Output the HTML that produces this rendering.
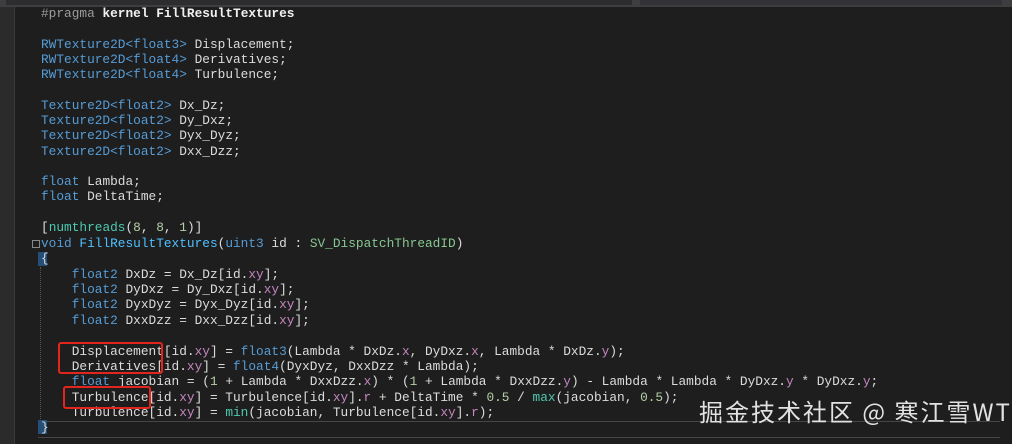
<!DOCTYPE html>
<html><head><meta charset="utf-8"><style>
body{margin:0;width:1012px;height:444px;background:#1e1e1e;overflow:hidden;position:relative;font-family:"Liberation Mono",monospace;}
#top{position:absolute;left:0;top:0;width:1012px;height:7px;background:#3e3e40;}
#top .b{position:absolute;left:6px;top:0;width:626px;height:5px;background:#2d2d30;}
#top .c{position:absolute;left:640px;top:0;width:362px;height:5px;background:#333337;}
#left{position:absolute;left:0;top:7px;width:14px;height:437px;background:#2b2b2b;border-right:1px solid #3a3a3a;}
.l{position:absolute;left:41px;font-size:12.8px;line-height:15.3px;white-space:pre;color:#dcdcdc;}
.k{color:#569cd6}.g{color:#9b9b9b}.w{color:#f0f0f0;font-weight:bold}.n{color:#b5cea8}.p{color:#c586c0}.t{color:#4ec9b0}.s{color:#86c691}.f{color:#4fc1ff}.m{color:#d0d0d0}
.box{position:absolute;border:2px solid #e3261d;border-radius:3px;}
#cur{position:absolute;left:38px;top:421px;width:962px;height:15px;border-top:1px solid #464646;border-bottom:1px solid #464646;}
#wm{position:absolute;left:699px;top:393px;font-family:"Noto Sans CJK SC",sans-serif;font-size:24px;letter-spacing:2px;color:#e2e2e2;white-space:nowrap;}
.fold{position:absolute;left:40px;width:1px;border-left:1px dotted #555;}
</style></head><body>
<div id="top"><div class="b"></div><div class="c"></div></div>
<div id="left"></div>
<div id="cur"></div>
<div class="fold" style="top:267px;height:152px"></div>
<div style="position:absolute;left:32px;top:240px;width:6px;height:6px;border:1px solid #888;"></div>
<div style="position:absolute;left:38px;top:252px;width:9px;height:14px;background:#264f78"></div>
<div style="position:absolute;left:38px;top:420px;width:9px;height:14px;background:#264f78"></div>
<div class="l" style="top:6px"><span class="g">#pragma</span> <span class="w">kernel</span> <span class="w">FillResultTextures</span></div>
<div class="l" style="top:37px"><span class="k">RWTexture2D&lt;float3&gt;</span> Displacement;</div>
<div class="l" style="top:52px"><span class="k">RWTexture2D&lt;float4&gt;</span> Derivatives;</div>
<div class="l" style="top:67px"><span class="k">RWTexture2D&lt;float4&gt;</span> Turbulence;</div>
<div class="l" style="top:98px"><span class="k">Texture2D&lt;float2&gt;</span> Dx_Dz;</div>
<div class="l" style="top:113px"><span class="k">Texture2D&lt;float2&gt;</span> Dy_Dxz;</div>
<div class="l" style="top:128px"><span class="k">Texture2D&lt;float2&gt;</span> Dyx_Dyz;</div>
<div class="l" style="top:144px"><span class="k">Texture2D&lt;float2&gt;</span> Dxx_Dzz;</div>
<div class="l" style="top:174px"><span class="k">float</span> Lambda;</div>
<div class="l" style="top:189px"><span class="k">float</span> DeltaTime;</div>
<div class="l" style="top:220px">[<span class="t">numthreads</span>(<span class="n">8</span>, <span class="n">8</span>, <span class="n">1</span>)]</div>
<div class="l" style="top:236px"><span class="k">void</span> <span class="f">FillResultTextures</span>(<span class="k">uint3</span> id : <span class="s">SV_DispatchThreadID</span>)</div>
<div class="l" style="top:251px">{</div>
<div class="l" style="top:267px">    <span class="k">float2</span> DxDz = Dx_Dz[id.<span class="p">xy</span>];</div>
<div class="l" style="top:282px">    <span class="k">float2</span> DyDxz = Dy_Dxz[id.<span class="p">xy</span>];</div>
<div class="l" style="top:297px">    <span class="k">float2</span> DyxDyz = Dyx_Dyz[id.<span class="p">xy</span>];</div>
<div class="l" style="top:313px">    <span class="k">float2</span> DxxDzz = Dxx_Dzz[id.<span class="p">xy</span>];</div>
<div class="l" style="top:344px">    Displacement[id.<span class="p">xy</span>] = <span class="k">float3</span>(Lambda * DxDz.<span class="p">x</span>, DyDxz.<span class="p">x</span>, Lambda * DxDz.<span class="p">y</span>);</div>
<div class="l" style="top:359px">    Derivatives[id.<span class="p">xy</span>] = <span class="k">float4</span>(DyxDyz, DxxDzz * Lambda);</div>
<div class="l" style="top:374px">    <span class="k">float</span> jacobian = (<span class="n">1</span> + Lambda * DxxDzz.<span class="p">x</span>) * (<span class="n">1</span> + Lambda * DxxDzz.<span class="p">y</span>) - Lambda * Lambda * DyDxz.<span class="p">y</span> * DyDxz.<span class="p">y</span>;</div>
<div class="l" style="top:390px">    Turbulence[id.<span class="p">xy</span>] = Turbulence[id.<span class="p">xy</span>].<span class="p">r</span> + DeltaTime * <span class="n">0.5</span> / <span class="t">max</span>(jacobian, <span class="n">0.5</span>);</div>
<div class="l" style="top:405px">    Turbulence[id.<span class="p">xy</span>] = <span class="t">min</span>(jacobian, Turbulence[id.<span class="p">xy</span>].<span class="p">r</span>);</div>
<div class="l" style="top:420px">}</div>
<div class="box" style="left:58px;top:342px;width:101px;height:28px"></div>
<div class="box" style="left:63px;top:386px;width:84px;height:19px"></div>
<div id="wm">掘金技术社区 @ 寒江雪WT</div>
</body></html>
